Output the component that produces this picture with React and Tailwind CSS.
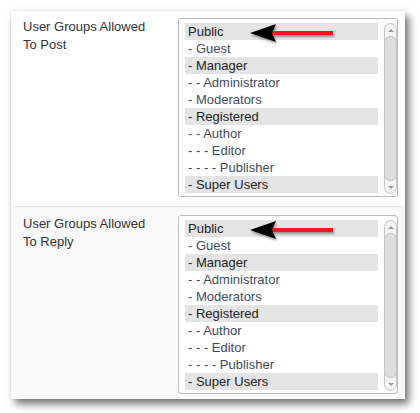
import React from 'react';

const groups = [
  { label: 'Public', header: true },
  { label: '- Guest' },
  { label: '- Manager', header: true },
  { label: '- - Administrator' },
  { label: '- Moderators' },
  { label: '- Registered', header: true },
  { label: '- - Author' },
  { label: '- - - Editor' },
  { label: '- - - - Publisher' },
  { label: '- Super Users', header: true },
];

const Arrow = () => (
  <svg
    width="88"
    height="24"
    viewBox="0 0 88 24"
    className="absolute left-[70px] top-[2px] drop-shadow-[1px_2px_1px_rgba(0,0,0,0.35)]"
  >
    <rect x="22" y="10" width="62" height="4" fill="#ea1a1d" />
    <polygon points="1,12 27,3 23,12 27,21" fill="#000" />
  </svg>
);

const Scrollbar = () => (
  <div className="flex flex-col w-[13px] mt-[0px] mb-[2px] rounded-full border border-[#c4c4c4] bg-[#f4f4f4] overflow-hidden">
    <div className="h-[12px] flex items-center justify-center">
      <div className="w-0 h-0 border-l-[3px] border-r-[3px] border-b-[3px] border-l-transparent border-r-transparent border-b-[#9a9a9a]" />
    </div>
    <div className="flex-1 mx-[-1px] rounded-full border border-[#bdbdbd] bg-[#dedede]" />
    <div className="h-[12px] flex items-center justify-center">
      <div className="w-0 h-0 border-l-[3px] border-r-[3px] border-t-[3px] border-l-transparent border-r-transparent border-t-[#9a9a9a]" />
    </div>
  </div>
);

const GroupList = () => (
  <div className="relative flex w-[220px] h-[179px] border border-[#bbbbbb] rounded-[3px] bg-white pl-[6px] pt-[4px] pb-[0px]">
    <ul className="w-[193px] flex flex-col">
      {groups.map((g) => (
        <li
          key={g.label}
          className={
            g.header
              ? 'h-[17px] leading-[17px] pl-[3px] bg-[#e4e4e4] text-[#222]'
              : 'h-[17px] leading-[17px] pl-[3px] text-[#3f4b5b]'
          }
        >
          {g.label}
        </li>
      ))}
    </ul>
    <div className="w-[6px]" />
    <Scrollbar />
    <Arrow />
  </div>
);

const Row = ({ title, second, className }) => (
  <div className={'flex items-start pl-[12px] ' + className}>
    <div className="w-[155px] leading-[18px] text-[#333]">
      User Groups Allowed
      <br />
      {second}
    </div>
    <GroupList />
  </div>
);

export default function App() {
  return (
    <div className="w-[420px] h-[413px] bg-white pt-[11px] pl-[11px] text-[13px] font-['Liberation_Sans',Arial,sans-serif]">
      <div className="w-[394px] h-[388px] bg-[#f9f9f9] shadow-[4px_5px_8px_rgba(0,0,0,0.55),0_0_2px_rgba(0,0,0,0.12)]">
        <Row second="To Post" className="bg-white pt-[7px] pb-[9px]" />
        <div className="mx-[4px] h-px bg-[#dddddd]" />
        <Row second="To Reply" className="pt-[8px] pb-[5px]" />
      </div>
    </div>
  );
}
